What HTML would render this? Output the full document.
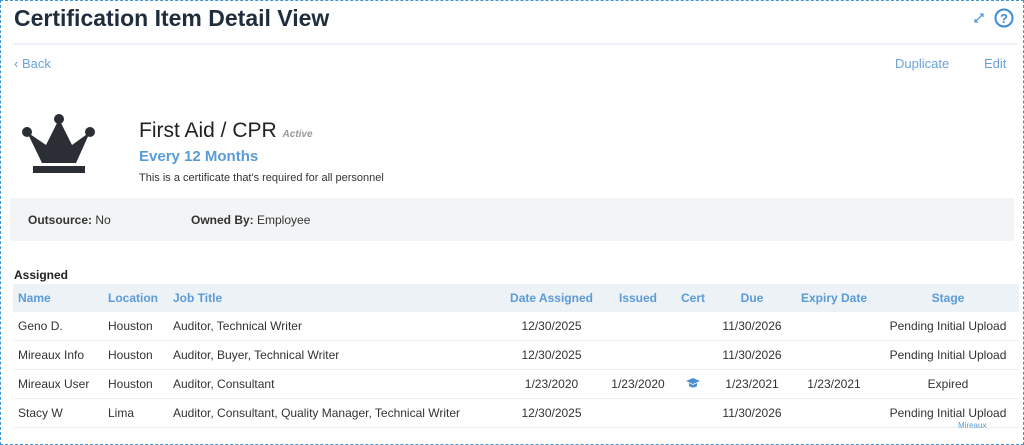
<!DOCTYPE html>
<html><head><style>
body{margin:0;width:1024px;height:445px;overflow:hidden;background:#fff;font-family:"Liberation Sans",sans-serif;color:#333;position:relative}
.frame{position:absolute;left:0;top:0;width:1022px;height:443px;border:1px dashed #3b95d8}
.a{position:absolute;white-space:nowrap}
h1{position:absolute;left:14px;top:5px;margin:0;font-size:23px;font-weight:bold;color:#1f2d3d}
.hr{position:absolute;left:13px;top:43px;width:1004px;height:2px;background:#eef2f8}
.blue{color:#6aa3d9}
.grey{position:absolute;left:10px;top:198px;width:1004px;height:43px;background:#f3f4f5}
table{position:absolute;left:13px;top:284px;width:1006px;border-collapse:collapse;font-size:12px}
th{color:#5a9bd8;font-weight:bold;height:28px;background:#edf2f7;text-align:center;padding:0}
td{height:28px;border-bottom:1px solid #eef0f2;text-align:center;padding:0;color:#333}
.l{text-align:left;padding-left:5px}
</style></head><body>
<div class="frame"></div>
<h1>Certification Item Detail View</h1>
<svg class="a" style="left:973px;top:12px" width="12" height="12" viewBox="0 0 12 12"><path d="M2 10L10 2M7 2h3v3M2 7v3h3" stroke="#5a9bd8" stroke-width="1.3" fill="none"/></svg>
<svg class="a" style="left:994px;top:8px" width="20" height="20" viewBox="0 0 20 20"><circle cx="10" cy="10" r="8.5" stroke="#3b8ad6" stroke-width="2" fill="none"/><text x="10" y="15" font-size="13" font-weight="bold" text-anchor="middle" fill="#3b8ad6" font-family="Liberation Sans">?</text></svg>
<div class="hr"></div>
<div class="a blue" style="left:14px;top:56px;font-size:13px">‹ Back</div>
<div class="a blue" style="left:895px;top:56px;font-size:13px">Duplicate</div>
<div class="a blue" style="left:984px;top:56px;font-size:13px">Edit</div>
<svg class="a" style="left:20px;top:113px" width="78" height="62" viewBox="0 0 78 62"><circle cx="39" cy="6" r="5" fill="#2b2f35"/><circle cx="7" cy="19" r="5" fill="#2b2f35"/><circle cx="70" cy="19" r="5" fill="#2b2f35"/><path d="M7 19L22 50H56L70 19L52 32L39 6L26 32Z" fill="#2b2f35"/><rect x="13" y="53" width="52" height="7" fill="#2b2f35"/></svg>
<div class="a" style="left:139px;top:119px;font-size:21px;color:#222">First Aid / CPR <span style="font-size:10px;color:#999;font-style:italic;font-weight:bold">Active</span></div>
<div class="a" style="left:139px;top:148px;font-size:15px;font-weight:bold;color:#5a9bd8">Every 12 Months</div>
<div class="a" style="left:139px;top:172px;font-size:11px;color:#333">This is a certificate that's required for all personnel</div>
<div class="grey"></div>
<div class="a" style="left:28px;top:213px;font-size:12px"><b>Outsource:</b> No</div>
<div class="a" style="left:191px;top:213px;font-size:12px"><b>Owned By:</b> Employee</div>
<div class="a" style="left:14px;top:268px;font-size:12px;font-weight:bold;color:#222">Assigned</div>
<table>
<tr><th class="l" style="width:85px">Name</th><th class="l" style="width:60px">Location</th><th class="l" style="width:327px">Job Title</th><th style="width:103px">Date Assigned</th><th style="width:70px">Issued</th><th style="width:40px">Cert</th><th style="width:78px">Due</th><th style="width:86px">Expiry Date</th><th>Stage</th></tr>
<tr><td class="l">Geno D.</td><td class="l">Houston</td><td class="l">Auditor, Technical Writer</td><td>12/30/2025</td><td></td><td></td><td>11/30/2026</td><td></td><td>Pending Initial Upload</td></tr>
<tr><td class="l">Mireaux Info</td><td class="l">Houston</td><td class="l">Auditor, Buyer, Technical Writer</td><td>12/30/2025</td><td></td><td></td><td>11/30/2026</td><td></td><td>Pending Initial Upload</td></tr>
<tr><td class="l">Mireaux User</td><td class="l">Houston</td><td class="l">Auditor, Consultant</td><td>1/23/2020</td><td>1/23/2020</td><td><svg width="14" height="10" viewBox="0 0 14 10"><path d="M7 0L14 3L7 6L0 3Z" fill="#4a8fd0"/><path d="M3 5v3c2 2 6 2 8 0V5L7 7Z" fill="#4a8fd0"/></svg></td><td>1/23/2021</td><td>1/23/2021</td><td>Expired</td></tr>
<tr><td class="l">Stacy W</td><td class="l">Lima</td><td class="l">Auditor, Consultant, Quality Manager, Technical Writer</td><td>12/30/2025</td><td></td><td></td><td>11/30/2026</td><td></td><td>Pending Initial Upload</td></tr>
</table>
<div class="a" style="left:958px;top:421px;font-size:8px;color:#5a9bd8">Mireaux</div>
</body></html>
